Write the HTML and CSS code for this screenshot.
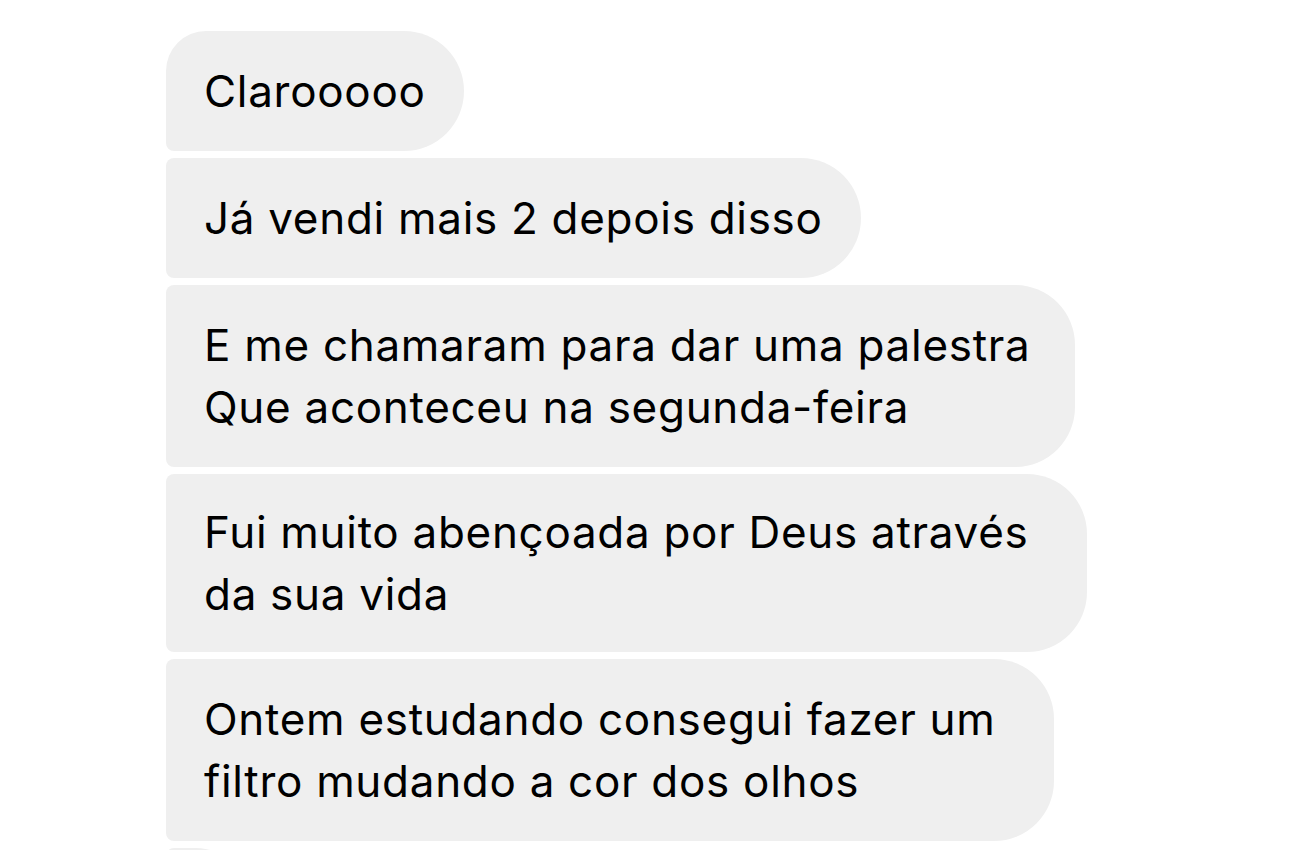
FILE: index.html
```html
<!DOCTYPE html>
<html>
<head>
    <meta charset="utf-8" />
    <title>Mensagens</title>
    <link rel="stylesheet" href="styles.css">
</head>
<body>
<div class="thread">
    <div class="msg first">Clarooooo</div>
    <div class="msg">Já vendi mais 2 depois disso</div>
    <div class="msg two">E me chamaram para dar uma palestra<br>Que aconteceu na segunda-feira</div>
    <div class="msg two wide short">Fui muito abençoada por Deus através<br>da sua vida</div>
    <div class="msg two wide">Ontem estudando consegui fazer um<br>filtro mudando a cor dos olhos</div>
    <div class="msg">&nbsp;</div>
</div>
</body>
</html>
```

FILE: styles.css
```css
*{margin:0;padding:0;}
body{background:#fff;overflow:hidden;}
.thread{
    display:flex;
    flex-direction:column;
    align-items:flex-start;
    gap:7px;
    padding:31px 0 0 166px;
}
.msg{
    background:#efefef;
    color:#000;
    font:44px/62px Inter,"Liberation Sans",sans-serif;
    letter-spacing:0.7px;
    white-space:nowrap;
    padding:29px 38px 29px 38px;
    border-radius:8px 60px 60px 8px;
}
.msg.first{border-top-left-radius:40px;}
.msg.two{padding-right:45px;}
.msg.wide{padding-right:59px;}
.msg.short{padding-top:27px;padding-bottom:27px;}
```
